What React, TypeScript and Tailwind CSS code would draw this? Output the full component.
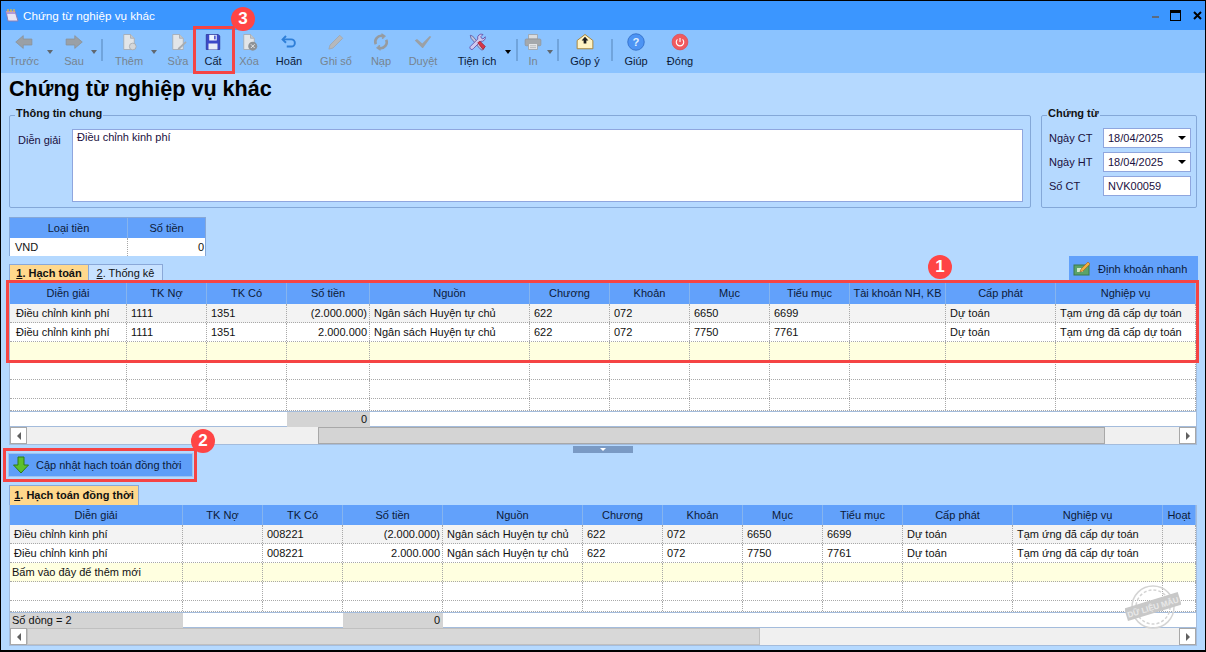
import type { ReactNode } from "react";

const font = "font-['Liberation_Sans',Arial,sans-serif]";

const IconBack = () => (
  <svg width="18" height="18" viewBox="0 0 24 24"><path d="M1 12 11 3.5V8h11.5v8H11v4.5z" fill="#9aa0a6" stroke="#8a9097" /></svg>
);
const IconNext = () => (
  <svg width="18" height="18" viewBox="0 0 24 24"><path d="M23 12 13 3.5V8H1.5v8H13v4.5z" fill="#9aa0a6" stroke="#8a9097" /></svg>
);
const IconDoc = ({ badge }: { badge?: ReactNode }) => (
  <svg width="18" height="18" viewBox="0 0 24 24">
    <path d="M5 2h9l5 5v15H5z" fill="#e2e5e8" stroke="#a2a6ab" />
    <path d="M14 2v5h5" fill="#c4c8cc" stroke="#a2a6ab" />
    {badge}
  </svg>
);
const IconSave = () => (
  <svg width="18" height="18" viewBox="0 0 24 24">
    <path d="M3 2h16l2 2v18H3z" fill="#3c49c8" stroke="#2a3296" />
    <rect x="7" y="2.5" width="10" height="7.5" fill="#eef3ff" />
    <rect x="13.5" y="3.5" width="2" height="5" fill="#3c49c8" />
    <rect x="6" y="14" width="12" height="8" fill="#e8edf8" />
  </svg>
);
const IconUndo = () => (
  <svg width="18" height="18" viewBox="0 0 24 24" fill="none" stroke="#2f7fd8" strokeWidth="2.6">
    <path d="M8 4 3.5 8.5 8 13" />
    <path d="M4 8.5h11a4.8 4.8 0 0 1 0 9.6H9" />
  </svg>
);
const IconPencil = () => (
  <svg width="18" height="18" viewBox="0 0 24 24">
    <path d="M17 3l4 4L8 20l-5.5 1.5L4 16z" fill="#b5b8bc" stroke="#a0a4a8" />
  </svg>
);
const IconReload = () => (
  <svg width="18" height="18" viewBox="0 0 24 24" fill="none" stroke="#979b9f" strokeWidth="3.4">
    <path d="M5 15a8 8 0 0 1 9-11" />
    <path d="M19 9a8 8 0 0 1-9 11" />
    <path d="M13 1l5 3-4 4z" fill="#979b9f" strokeWidth="1" />
    <path d="M11 23l-5-3 4-4z" fill="#979b9f" strokeWidth="1" />
  </svg>
);
const IconCheck = () => (
  <svg width="18" height="18" viewBox="0 0 24 24"><path d="M1 10l3-2 7 6L21 4l2 1-11 15h-1z" fill="#9ba0a5" /></svg>
);
const IconTools = () => (
  <svg width="18" height="18" viewBox="0 0 24 24">
    <path d="M3 3l3 1 12 14 3 3-2 2-3-2L4 7z" fill="#c0c6dc" stroke="#5a4f9a" />
    <path d="M20 2l-3 3 1 2 2 1 3-3a5 5 0 0 1-6 6L7 21a2.5 2.5 0 0 1-4-3L13 8a5 5 0 0 1 7-6z" fill="#cfc9ef" stroke="#553f9e" />
    <path d="M13 13l3-2 7 7-3 4z" fill="#d8364a" stroke="#97202e" />
  </svg>
);
const IconPrinter = () => (
  <svg width="18" height="18" viewBox="0 0 24 24">
    <path d="M6 2h12v6H6z" fill="#d9dcdf" stroke="#999da1" />
    <rect x="1.5" y="8" width="21" height="9" rx="1.5" fill="#a4a8ac" stroke="#90949a" />
    <path d="M6 14h12v8H6z" fill="#e3e5e8" stroke="#999da1" />
    <path d="M8 17h8M8 19.5h8" stroke="#aaaeb2" />
  </svg>
);
const IconMail = () => (
  <svg width="18" height="18" viewBox="0 0 24 24">
    <path d="M1.5 10 12 2l10.5 8v11h-21z" fill="#fff3c4" stroke="#a8843a" strokeWidth="1.3" />
    <path d="M12 5l4.5 5h-2.7v4h-3.6v-4H7.500z" fill="#1c1c1c" />
  </svg>
);
const IconHelp = () => (
  <svg width="18" height="18" viewBox="0 0 24 24">
    <circle cx="12" cy="12" r="11" fill="#4d94f4" stroke="#2a66c0" />
    <text x="12" y="17" textAnchor="middle" fontSize="15" fontWeight="700" fill="#dfeeff" fontFamily="Liberation Sans">?</text>
  </svg>
);
const IconPower = () => (
  <svg width="18" height="18" viewBox="0 0 24 24">
    <circle cx="12" cy="12" r="10.5" fill="#f05a5f" stroke="#e0484e" />
    <path d="M12 6.5v5.5" stroke="#fff" strokeWidth="1.5" />
    <path d="M8.6 8.5a5 5 0 1 0 6.8 0" fill="none" stroke="#fff" strokeWidth="1.5" />
  </svg>
);

type ToolProps = { label: string; icon: ReactNode; size: string; dim?: boolean };

function Tool({ label, icon, size, dim }: ToolProps) {
  return (
    <div className={`${size} flex shrink-0 flex-col items-center`}>
      <div className="mt-[3px] flex h-[18px] items-center">{icon}</div>
      <span className={`mt-[3px] text-[11px] leading-[14px] whitespace-nowrap ${dim ? "text-[#77848f]" : "text-[#0c1a38]"}`}>{label}</span>
    </div>
  );
}

function Caret({ size, dim }: { size: string; dim?: boolean }) {
  return (
    <div className={`${size} flex shrink-0 justify-center pt-[20px]`}>
      <div className={`h-0 w-0 border-x-[3.5px] border-t-[4px] border-x-transparent ${dim ? "border-t-[#606870]" : "border-t-black"}`} />
    </div>
  );
}

function Sep({ size }: { size: string }) {
  return <div className={`${size} mt-[9px] h-[22px] w-[2px] shrink-0 bg-[#70a4dc]`} />;
}

function Toolbar() {
  return (
    <div className="flex h-[43px] shrink-0 bg-[#8bc3ff] pl-px">
      <Tool label="Trước" size="w-[44px]" dim icon={<IconBack />} />
      <Caret size="w-[7px]" dim />
      <Tool label="Sau" size="ml-[5px] w-[32px]" dim icon={<IconNext />} />
      <Caret size="w-[7px]" dim />
      <Sep size="ml-[4px]" />
      <Tool label="Thêm" size="ml-[5px] w-[42px]" dim icon={<IconDoc badge={<circle cx="17" cy="18" r="4.5" fill="#d4d7da" stroke="#a2a6ab" />} />} />
      <Caret size="w-[8px]" dim />
      <Tool label="Sửa" size="ml-[2px] w-[36px]" dim icon={<IconDoc badge={<path d="M22 11l1.5 1.5L14 22l-2.5.5.5-2.5z" fill="#a8acb0" />} />} />
      <Tool label="Cất" size="w-[34px]" icon={<IconSave />} />
      <Tool label="Xóa" size="w-[38px]" dim icon={<IconDoc badge={<g><circle cx="17" cy="17.500" r="6" fill="#8e9296" /><path d="M14.500 15l5 5M19.500 15l-5 5" stroke="#fff" /></g>} />} />
      <Tool label="Hoãn" size="w-[42px]" icon={<IconUndo />} />
      <Tool label="Ghi sổ" size="w-[52px]" dim icon={<IconPencil />} />
      <Tool label="Nạp" size="w-[38px]" dim icon={<IconReload />} />
      <Tool label="Duyệt" size="w-[46px]" dim icon={<IconCheck />} />
      <Tool label="Tiện ích" size="ml-[4px] w-[54px]" icon={<IconTools />} />
      <Caret size="w-[8px]" />
      <Sep size="ml-[4px]" />
      <Tool label="In" size="ml-[2px] w-[26px]" dim icon={<IconPrinter />} />
      <Caret size="w-[7px]" dim />
      <Sep size="ml-[4px]" />
      <Tool label="Góp ý" size="w-[52px]" icon={<IconMail />} />
      <Sep size="" />
      <Tool label="Giúp" size="w-[46px]" icon={<IconHelp />} />
      <Tool label="Đóng" size="w-[42px]" icon={<IconPower />} />
    </div>
  );
}

function TitleBar() {
  return (
    <div className="flex h-[29px] shrink-0 items-center bg-[#3b96ff] pl-[3px]">
      <svg width="16" height="16" viewBox="0 0 16 16">
        <path d="M2 3h9l3 10H4z" fill="#e8e4f4" stroke="#8a80b8" />
        <path d="M2 3h9v3H2.8z" fill="#b49ad8" />
        <path d="M4 1v3M7 1v3M10 1v3" stroke="#e8c040" strokeWidth="1.2" />
      </svg>
      <span className="ml-[3px] text-[11.7px] text-white">Chứng từ nghiệp vụ khác</span>
      <div className="ml-auto flex items-center pr-[3px]">
        <div className="mt-[2px] h-[2px] w-[7px] bg-[#5b6b80]" />
        <div className="ml-[11px] h-[11px] w-[11px] border border-t-[3px] border-black" />
        <svg className="ml-[12px]" width="9" height="9" viewBox="0 0 9 9"><path d="M1 1l7 7M8 1l-7 7" stroke="#000" strokeWidth="2" /></svg>
      </div>
    </div>
  );
}

function Group({ title, size, children }: { title: string; size: string; children: ReactNode }) {
  return (
    <fieldset className={`${size} relative h-[101px] rounded-[2px] border border-[#84a8d8]`}>
      <legend className="-ml-[2px] px-[1px] pb-[4px] text-[11px] leading-[12px] font-bold text-[#111]">{title}</legend>
      {children}
    </fieldset>
  );
}

const fieldBox = "h-[20px] w-[88px] border border-[#8fa6de] bg-white px-[4px] text-[11px] leading-[18px] text-[#1a1040]";

function DateField({ value }: { value: string }) {
  return (
    <div className={`${fieldBox} flex items-center justify-between pr-[4px]`}>
      <span>{value}</span>
      <div className="h-0 w-0 border-x-[4px] border-t-[4px] border-x-transparent border-t-black" />
    </div>
  );
}

function Field({ label, children }: { label: string; children: ReactNode }) {
  return (
    <div className="flex h-[20px] items-center justify-between">
      <span className="text-[11px] text-[#1a1040]">{label}</span>
      {children}
    </div>
  );
}

type Cell = { text?: string; right?: boolean; tight?: boolean };
type Row = { bg: string; h: string; cells: (string | Cell)[] };

function GridRow({ cols, row }: { cols: string; row: Row }) {
  return (
    <div className={`${cols} grid ${row.h} ${row.bg} border-b border-dotted border-[#a8a8a8]`}>
      {row.cells.map((c, i) => {
        const cell = typeof c === "string" ? { text: c } : c;
        return (
          <div
            key={i}
            className={`overflow-visible border-r border-dotted border-[#a8a8a8] px-[4px] text-[11px] leading-[18px] whitespace-nowrap text-[#111] ${cell.right ? "pr-[2px] text-right" : ""} ${cell.tight ? "pl-[2px]" : ""}`}
          >
            {cell.text}
          </div>
        );
      })}
    </div>
  );
}

function GridHead({ cols, names, h }: { cols: string; names: string[]; h: string }) {
  return (
    <div className={`${cols} ${h} grid bg-[#62a1fb]`}>
      {names.map((n, i) => (
        <div key={i} className="overflow-hidden border-r border-[#86b4ee] text-center text-[11px] leading-[21px] whitespace-nowrap text-[#0c1a38]">
          {n}
        </div>
      ))}
    </div>
  );
}

function ScrollBtn({ dir }: { dir: "l" | "r" }) {
  return (
    <div className="flex h-full w-[17px] shrink-0 items-center justify-center border border-[#a8a8a8] bg-white">
      {dir === "l" ? (
        <div className="h-0 w-0 border-y-[4px] border-r-[4px] border-y-transparent border-r-[#606060]" />
      ) : (
        <div className="h-0 w-0 border-y-[4px] border-l-[4px] border-y-transparent border-l-[#606060]" />
      )}
    </div>
  );
}

const mainCols = "grid-cols-[117px_80px_80px_83px_160px_80px_80px_80px_80px_96px_110px_1fr]";
const subCols = "grid-cols-[173px_80px_80px_100px_140px_80px_80px_80px_80px_110px_150px_1fr]";
const indent = "[&>div:first-child]:pl-[6px]";

const m = (a: string, b: string, c: string) => [
  "Điều chỉnh kinh phí", "1111", "1351", { text: a, right: true }, "Ngân sách Huyện tự chủ", "622", "072", b, c, "", "Dự toán", "Tạm ứng đã cấp dự toán",
];
const s = (a: string, b: string, c: string) => [
  "Điều chỉnh kinh phí", "", "008221", { text: a, right: true }, "Ngân sách Huyện tự chủ", "622", "072", b, c, "Dự toán", "Tạm ứng đã cấp dự toán", "",
];
const blank = Array(12).fill("") as string[];

const mainRows: Row[] = [
  { bg: `bg-[#f3f3f3] ${indent}`, h: "h-[19px]", cells: m("(2.000.000)", "6650", "6699") },
  { bg: `bg-white ${indent}`, h: "h-[19px]", cells: m("2.000.000", "7750", "7761") },
  { bg: "bg-[#ffffe0]", h: "h-[19px]", cells: blank },
  { bg: "bg-white", h: "h-[19px]", cells: blank },
  { bg: "bg-white", h: "h-[19px]", cells: blank },
  { bg: "bg-white", h: "h-[12px]", cells: blank },
];

const subRows: Row[] = [
  { bg: "bg-[#f3f3f3]", h: "h-[19px]", cells: s("(2.000.000)", "6650", "6699") },
  { bg: "bg-white", h: "h-[19px]", cells: s("2.000.000", "7750", "7761") },
  { bg: "bg-[#ffffe0]", h: "h-[19px]", cells: [{ text: "Bấm vào đây để thêm mới", tight: true }, ...blank.slice(1)] },
  { bg: "bg-white", h: "h-[19px]", cells: blank },
  { bg: "bg-white", h: "h-[12px]", cells: blank },
];

function Badge({ n, pos }: { n: number; pos: string }) {
  return (
    <div className={`absolute ${pos} flex h-[24px] w-[24px] items-center justify-center rounded-full bg-[#ff4545] text-[17px] font-bold text-white`}>
      {n}
    </div>
  );
}

export default function App() {
  return (
    <div className={`relative flex h-[652px] w-[1206px] flex-col overflow-hidden border border-b-2 border-black bg-[#b5d9ff] ${font}`}>
      <TitleBar />
      <Toolbar />

      <div className="flex min-h-0 flex-1 flex-col px-[8px]">
        <h1 className="h-[34px] pt-[2px] text-[21.6px] leading-[28px] font-bold text-black">Chứng từ nghiệp vụ khác</h1>

        <div className="flex gap-[10px]">
          <Group title="Thông tin chung" size="w-[1021px] px-[7px]">
            <div className="flex pt-[6px]">
              <span className="w-[55px] shrink-0 pt-[3px] pl-px text-[11px] whitespace-nowrap text-[#1a1040]">Diễn giải</span>
              <div className="h-[73px] w-[951px] border border-[#8fa6de] bg-white px-[4px] text-[11px] leading-[14px] text-[#1a1040]">Điều chỉnh kinh phí</div>
            </div>
          </Group>
          <Group title="Chứng từ" size="w-[157px] pr-[5px] pl-[7px]">
            <div className="flex flex-col gap-[4px] pt-[5px]">
              <Field label="Ngày CT"><DateField value="18/04/2025" /></Field>
              <Field label="Ngày HT"><DateField value="18/04/2025" /></Field>
              <Field label="Số CT"><div className={fieldBox}>NVK00059</div></Field>
            </div>
          </Group>
        </div>

        <div className="mt-[9px] h-[39px] w-[197px] border border-[#86a8d8]">
          <div className="grid h-[20px] grid-cols-[118px_1fr] bg-[#62a1fb] text-center text-[11px] leading-[20px] text-[#0c1a38]">
            <div className="border-r border-[#86b4ee]">Loại tiền</div>
            <div>Số tiền</div>
          </div>
          <div className="grid h-[18px] grid-cols-[118px_1fr] bg-white text-[11px] leading-[18px] text-[#111]">
            <div className="border-r border-dotted border-[#a8a8a8] pl-[5px]">VND</div>
            <div className="pr-px text-right">0</div>
          </div>
        </div>

        <div className="flex h-[26px] items-end">
          <div className="flex h-[18px] w-[79px] items-center justify-center border-t border-l border-[#8aa8d8] bg-[#ffd88c] text-[11px] font-bold text-[#111]"><span><u>1</u>. Hạch toán</span></div>
          <div className="flex h-[18px] w-[75px] items-center justify-center border-x border-t border-[#8aa8d8] bg-[#c8e2ff] text-[11px] text-[#111]"><span><u>2</u>. Thống kê</span></div>
          <div className="-mr-px ml-auto flex h-[26px] w-[129px] items-center bg-[#62a1fb] pl-[4px] text-[11px] text-[#0c1a38]">
            <svg width="18" height="16" viewBox="0 0 18 16">
              <rect x="1" y="4" width="15" height="10" fill="#5aa36a" stroke="#3d7a4c" />
              <rect x="4" y="7" width="6" height="4" fill="#cfe8c8" />
              <path d="M15 1l2 2-7 7-3 1 1-3z" fill="#f0b040" stroke="#a05a20" strokeWidth="0.6" />
            </svg>
            <span className="ml-[7px] whitespace-nowrap">Định khoản nhanh</span>
          </div>
        </div>

        <div className="flex h-[163px] flex-col border border-[#a4bcdc] bg-white">
          <GridHead cols={mainCols} h="h-[21px]" names={["Diễn giải", "TK Nợ", "TK Có", "Số tiền", "Nguồn", "Chương", "Khoản", "Mục", "Tiểu mục", "Tài khoản NH, KB", "Cấp phát", "Nghiệp vụ"]} />
          {mainRows.map((r, i) => <GridRow key={i} cols={mainCols} row={r} />)}
          <div className={`${mainCols} grid h-[16px] border-y border-[#a4bcdc] bg-white`}>
            <div className="col-start-4 bg-[#d4d4d4] pr-[3px] text-right text-[11px] leading-[15px] text-[#111]">0</div>
          </div>
          <div className="flex h-[17px] bg-[#f0f0f0]">
            <ScrollBtn dir="l" />
            <div className="ml-[291px] h-full w-[787px] border border-[#a8a8a8] bg-[#d4d4d4]" />
            <div className="flex-1" />
            <ScrollBtn dir="r" />
          </div>
        </div>

        <div className="flex h-[8px] justify-center pt-px">
          <div className="flex h-[7px] w-[60px] justify-center bg-[#7a9ac4] pt-[2px]">
            <div className="h-0 w-0 border-x-[3px] border-t-[3px] border-x-transparent border-t-white" />
          </div>
        </div>

        <div className="-ml-px h-[24px] w-[185px] border border-[#9cc4f0] bg-[#5e9ef8]">
          <div className="flex h-full items-center pl-[3px] text-[11px] whitespace-nowrap text-[#0c1a38]">
            <svg width="18" height="18" viewBox="0 0 18 18"><path d="M6 1h6v8h4.5L9 17 1.5 9H6z" fill="#5cc02c" stroke="#2f7a14" strokeWidth="1" /></svg>
            <span className="ml-[6px]">Cập nhật hạch toán đồng thời</span>
          </div>
        </div>

        <div className="mt-[8px] flex h-[20px] w-[130px] items-center justify-center border-x border-t border-[#8aa8d8] bg-[#ffd88c] text-[11px] font-bold whitespace-nowrap text-[#111]"><span><u>1</u>. Hạch toán đồng thời</span></div>

        <div className="flex h-[141px] flex-col border-x border-b border-[#a4bcdc] bg-white">
          <GridHead cols={subCols} h="h-[20px]" names={["Diễn giải", "TK Nợ", "TK Có", "Số tiền", "Nguồn", "Chương", "Khoản", "Mục", "Tiểu mục", "Cấp phát", "Nghiệp vụ", "Hoạt"]} />
          {subRows.map((r, i) => <GridRow key={i} cols={subCols} row={r} />)}
          <div className={`${subCols} grid h-[16px] border-y border-[#a4bcdc] bg-white text-[11px] leading-[15px] text-[#111]`}>
            <div className="bg-[#d4d4d4] pl-[2px]">Số dòng = 2</div>
            <div className="col-start-4 bg-[#d4d4d4] pr-[3px] text-right">0</div>
          </div>
          <div className="flex h-[17px] bg-[#f0f0f0]">
            <ScrollBtn dir="l" />
            <div className="h-full w-[733px] border border-[#c0c0c0] bg-[#d8d8d8]" />
            <div className="flex-1" />
            <ScrollBtn dir="r" />
          </div>
        </div>
      </div>

      {/* annotation boxes and numbers drawn over the window */}
      <div className="absolute top-[25px] left-[192px] h-[48px] w-[42px] border-[3px] border-[#f54444]" />
      <div className="absolute top-[279px] left-[5px] h-[83px] w-[1193px] border-[3px] border-[#f54444]" />
      <div className="absolute top-[447px] left-[2px] h-[34px] w-[194px] border-[3px] border-[#f54444]" />
      <Badge n={3} pos="top-[6px] left-[230px]" />
      <Badge n={1} pos="top-[254px] left-[927px]" />
      <Badge n={2} pos="top-[428px] left-[190px]" />

      <svg className="absolute top-[581px] left-[1124px]" width="56" height="50" viewBox="0 0 56 50">
        <g fill="none" stroke="#d4d4d4" strokeWidth="1.5">
          <circle cx="28" cy="25" r="21" />
          <circle cx="28" cy="25" r="17" strokeDasharray="3 2" />
        </g>
        <g transform="rotate(-17 28 25)">
          <rect x="0" y="18" width="56" height="13" fill="#c8c8c8" />
          <text x="28" y="28" textAnchor="middle" fontSize="8" fontWeight="700" fill="#e8e8e8" fontFamily="Liberation Sans">DỮ LIỆU MẪU</text>
        </g>
      </svg>
    </div>
  );
}
